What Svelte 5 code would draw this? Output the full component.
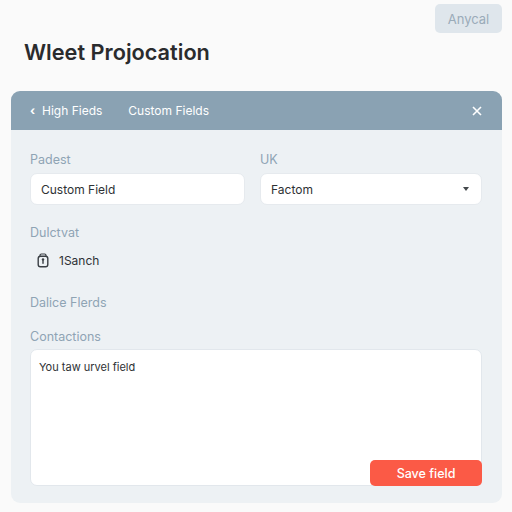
<script>
	let title = 'Wleet Projocation';
	let note = 'You taw urvel field';
</script>

<div class="page">
	<div class="top">
		<button class="any">Anycal</button>
	</div>
	<h1>{title}</h1>

	<section class="panel">
		<header>
			<span class="tab"><span class="back">‹</span>High Fieds</span>
			<span class="tab">Custom Fields</span>
			<svg class="close" width="12" height="12" viewBox="0 0 12 12">
				<path d="M2 2l8 8M10 2l-8 8" stroke="#fff" stroke-width="1.6" fill="none" />
			</svg>
		</header>

		<div class="body">
			<div class="cols">
				<div class="col">
					<div class="label">Padest</div>
					<div class="input">Custom Field</div>
				</div>
				<div class="col">
					<div class="label">UK</div>
					<div class="input select">
						Factom
						<span class="caret"></span>
					</div>
				</div>
			</div>

			<div class="label dup">Dulctvat</div>
			<div class="lock">
				<svg width="12" height="15" viewBox="0 0 12 15" fill="none">
					<path d="M3 3.2V2.4C3 1.6 3.6 1 4.4 1h3.2C8.4 1 9 1.6 9 2.4v.8" stroke="#3a3f44" stroke-width="1.2" />
					<rect x="1.2" y="3.2" width="9.6" height="10.6" rx="2.2" stroke="#3a3f44" stroke-width="1.4" />
					<circle cx="6" cy="6.4" r="1.2" fill="#3a3f44" />
					<rect x="5.3" y="7" width="1.4" height="3.8" fill="#3a3f44" />
				</svg>
				<span>1Sanch</span>
			</div>

			<div class="label opts">Dalice Flerds</div>
			<div class="label conts">Contactions</div>

			<div class="area">
				<p>{note}</p>
				<button class="save">Save field</button>
			</div>
		</div>
	</section>
</div>

<style>
	:global(body) {
		margin: 0;
		background: #fafafa;
	}
	.page {
		height: 512px;
		box-sizing: border-box;
		padding: 4px 10px 9px 11px;
		font-family: Inter, "Liberation Sans", sans-serif;
		display: flex;
		flex-direction: column;
	}
	.top {
		display: flex;
		justify-content: flex-end;
		height: 29px;
	}
	.any {
		width: 67px;
		height: 29px;
		border: none;
		border-radius: 5px;
		background: #dfe6ec;
		color: #9aabb9;
		font: 13px Inter, "Liberation Sans", sans-serif;
	}
	h1 {
		margin: 5px 0 0 13px;
		font-size: 21.7px;
		line-height: 28px;
		font-weight: 600;
		color: #2a2b2d;
	}
	.panel {
		margin-top: 25px;
		flex: 1;
		background: #edf1f4;
		border-radius: 9px;
		display: flex;
		flex-direction: column;
		overflow: hidden;
	}
	header {
		height: 39px;
		flex: none;
		background: #8aa2b3;
		display: flex;
		align-items: center;
		padding: 0 19px;
		gap: 26px;
		color: #fff;
		font-size: 12px;
	}
	.close {
		margin-left: auto;
	}
	.back {
		font-weight: 700;
		display: inline-block;
		width: 12px;
	}
	.body {
		flex: 1;
		padding: 22px 20px 17px 19px;
		display: flex;
		flex-direction: column;
		font-size: 12px;
		color: #2e3134;
	}
	.cols {
		display: grid;
		grid-template-columns: 215px 222px;
		gap: 15px;
	}
	.label {
		color: #8fa4b4;
		font-size: 12.5px;
		line-height: 16px;
	}
	.input {
		margin-top: 5px;
		height: 32px;
		box-sizing: border-box;
		padding: 0 10px;
		background: #fff;
		border: 1px solid #e6eaee;
		border-radius: 7px;
		display: flex;
		align-items: center;
		justify-content: space-between;
	}
	.caret {
		border-left: 3px solid transparent;
		border-right: 3px solid transparent;
		border-top: 4px solid #44484c;
		margin-right: 2px;
	}
	.dup {
		margin-top: 20px;
	}
	.lock {
		margin: 11px 0 0 7px;
		display: flex;
		align-items: center;
		gap: 10px;
		height: 16px;
	}
	.opts {
		margin-top: 27px;
	}
	.conts {
		margin-top: 18px;
	}
	.area {
		margin-top: 4px;
		flex: 1;
		background: #fff;
		border: 1px solid #e2e7ec;
		border-radius: 7px;
		position: relative;
		padding: 10px 8px;
	}
	.area p {
		margin: 0;
		font-size: 11px;
	}
	.save {
		position: absolute;
		right: -1px;
		bottom: -1px;
		width: 112px;
		height: 26px;
		border: none;
		border-radius: 5px;
		background: #fb5a46;
		color: #fff;
		font: 500 12.5px Inter, "Liberation Sans", sans-serif;
	}
</style>
